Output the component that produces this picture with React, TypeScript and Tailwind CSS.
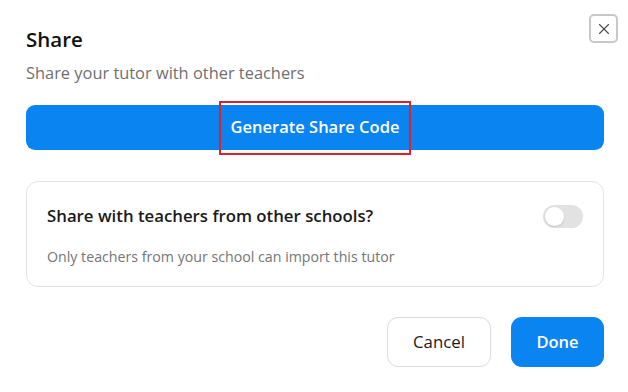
import { X } from "lucide-react";

export default function App() {
  return (
    <div className="relative w-[628px] h-[392px] bg-white font-['Open_Sans',sans-serif] text-[#1a1a1a]">
      <button className="absolute right-[10px] top-[14px] w-[29px] h-[29px] flex items-center justify-center rounded-[5px] border-2 border-[#c8c8c8] bg-white text-[#4a4a4a]">
        <X size={18} strokeWidth={1.5} />
      </button>

      <div className="pl-[26px] pr-[24px] pt-[25px] flex flex-col">
        <h2 className="text-[20.5px] leading-[28px] font-semibold text-[#111]">Share</h2>
        <p className="mt-[9px] text-[16.4px] leading-[22px] text-[#6f6f6f]">Share your tutor with other teachers</p>

        <button className="relative mt-[21px] h-[45px] w-full rounded-[9px] bg-[#0a84f0] text-white text-[16.5px] font-semibold flex items-center justify-center">
          Generate Share Code
          <span className="absolute left-[193px] w-[192px] -top-[4px] h-[54px] border-2 border-[#e0202a]" />
        </button>

        <div className="mt-[31px] rounded-[12px] border border-[#e3e3e3] pl-[20px] pr-[20px] pt-[22px] pb-[19px]">
          <div className="flex items-center justify-between">
            <span className="text-[16.8px] leading-[24px] font-semibold text-[#1a1a1a]">Share with teachers from other schools?</span>
            <span className="w-[40px] h-[23px] rounded-full bg-[#e2e2e2] p-[2px] flex items-center">
              <span className="w-[19px] h-[19px] rounded-full bg-white shadow-sm" />
            </span>
          </div>
          <p className="mt-[19px] text-[14.2px] leading-[20px] text-[#757575]">Only teachers from your school can import this tutor</p>
        </div>

        <div className="mt-[30px] flex justify-end gap-[20px]">
          <button className="h-[50px] w-[104px] rounded-[11px] border border-[#dcdcdc] bg-white text-[16.8px] font-medium text-[#1a1a1a]">Cancel</button>
          <button className="h-[50px] w-[93px] rounded-[11px] bg-[#0a84f0] text-[16.5px] font-semibold text-white">Done</button>
        </div>
      </div>
    </div>
  );
}
